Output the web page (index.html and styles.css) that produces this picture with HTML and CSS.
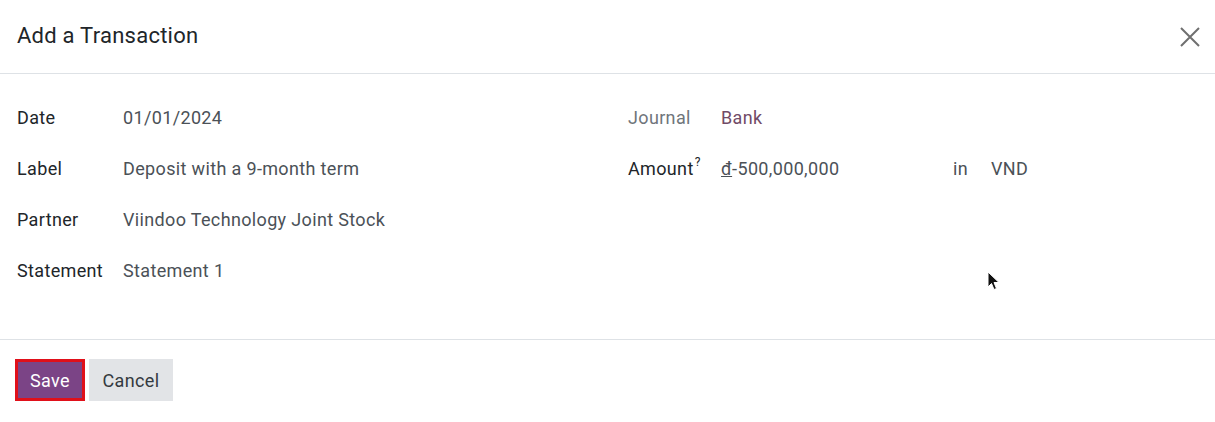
FILE: index.html
```html
<!DOCTYPE html>
<html lang="en">
<head>
<meta charset="utf-8">
<title>Add a Transaction</title>
<link rel="stylesheet" href="styles.css">
</head>
<body>
<div class="dialog">
  <header class="dlg-header">
    <h4 class="dlg-title">Add a Transaction</h4>
    <button class="dlg-close" aria-label="Close">
      <svg width="22" height="22" viewBox="0 0 22 22"><path d="M2 2 L20 20 M20 2 L2 20" stroke="#6f6f6f" stroke-width="2" fill="none"/></svg>
    </button>
  </header>
  <main class="dlg-body">
    <div class="col">
      <div class="row"><span class="lbl">Date</span><span class="val">01/01/2024</span></div>
      <div class="row"><span class="lbl">Label</span><span class="val">Deposit with a 9-month term</span></div>
      <div class="row"><span class="lbl">Partner</span><span class="val">Viindoo Technology Joint Stock</span></div>
      <div class="row"><span class="lbl">Statement</span><span class="val">Statement 1</span></div>
    </div>
    <div class="col col-right">
      <div class="row"><span class="lbl lbl-muted">Journal</span><span class="val link">Bank</span></div>
      <div class="row"><span class="lbl">Amount<sup>?</sup></span><span class="val amount"><u>đ</u>-500,000,000</span><span class="val in">in</span><span class="val">VND</span></div>
    </div>
  </main>
  <footer class="dlg-footer">
    <button class="btn btn-primary">Save</button>
    <button class="btn btn-secondary">Cancel</button>
  </footer>
  <svg class="cursor" width="14" height="20" viewBox="0 0 14 20"><path d="M1 1 L1 16 L4.5 12.5 L7 18.5 L9.5 17.5 L7 11.5 L12 11.5 Z" fill="#111" stroke="#fff" stroke-width="1"/></svg>
</div>
</body>
</html>
```
FILE: styles.css
```css
html, body { margin: 0; padding: 0; background: #fff; }
body { font-family: Roboto, "Noto Sans", sans-serif; color: #212529; }
.dialog { width: 1215px; height: 422px; position: relative; }
.dlg-header {
  height: 73px; border-bottom: 1px solid #dee2e6;
  display: flex; align-items: center; justify-content: space-between;
  padding: 0 15px 0 17px; box-sizing: content-box;
}
.dlg-title { margin: 0; font-size: 22px; font-weight: 400; color: #212529; padding-bottom: 2px; letter-spacing: 0.25px; }
.dlg-close { border: 0; background: none; padding: 0; width: 22px; height: 22px; display: flex; margin-right: -1px; }
.dlg-body {
  display: grid; grid-template-columns: 591px 1fr; column-gap: 20px;
  padding: 18px 17px 43px 17px; height: 204px;
}
.col { display: flex; flex-direction: column; }
.row { height: 51px; display: flex; align-items: center; font-size: 18px; letter-spacing: 0.35px; }
.lbl { width: 106px; flex: none; color: #212529; }
.col-right .lbl { width: 93px; }
.lbl sup { font-size: 12px; vertical-align: 9px; line-height: 0; margin-left: 1px; letter-spacing: 0; }
.lbl-muted { color: #6f757b; }
.val { color: #4b5157; }
.link { color: #714b67; }
.amount { width: 232px; flex: none; }
.in { width: 38px; flex: none; }
.dlg-footer {
  border-top: 1px solid #dee2e6; padding: 19px 15px; display: flex; gap: 4px; align-items: flex-start;
}
.btn {
  font-family: inherit; font-size: 18px; height: 42px; border: 0; padding: 0; border-radius: 0; letter-spacing: 0.35px;
}
.btn-primary { background: #7b4486; color: #fff; outline: 3px solid #e0101a; outline-offset: -3px; width: 70px; }
.btn-secondary { background: #e2e4e7; color: #343a40; width: 84px; }
.cursor { position: absolute; left: 987px; top: 271px; }
```
